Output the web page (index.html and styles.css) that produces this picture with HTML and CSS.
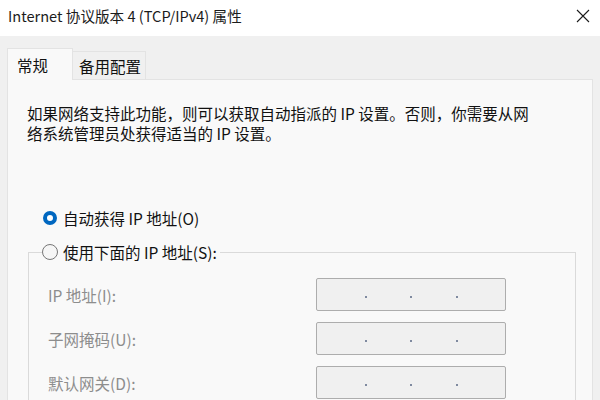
FILE: index.html
```html
<!DOCTYPE html>
<html lang="zh-CN">
<head>
<meta charset="utf-8">
<title>Internet 协议版本 4 (TCP/IPv4) 属性</title>
<link rel="stylesheet" href="styles.css">
</head>
<body>
<div class="window">
  <header class="titlebar">
    <span class="title">Internet 协议版本 4 (TCP/IPv4) 属性</span>
    <span class="close" aria-label="关闭">
      <svg width="14" height="14" viewBox="0 0 14 14"><path d="M1 1 L13 13 M13 1 L1 13" stroke="#1b1b1b" stroke-width="1.1" fill="none"/></svg>
    </span>
  </header>
  <div class="content">
    <div class="tabs">
      <div class="tab active">常规</div>
      <div class="tab">备用配置</div>
    </div>
    <div class="panel">
      <p class="intro">如果网络支持此功能，则可以获取自动指派的 IP 设置。否则，你需要从网<br>络系统管理员处获得适当的 IP 设置。</p>
      <div class="radio-row">
        <span class="radio checked"></span><span>自动获得 IP 地址(O)</span>
      </div>
      <fieldset class="group">
        <legend class="radio-row">
          <span class="radio"></span><span>使用下面的 IP 地址(S):</span>
        </legend>
        <div class="field">
          <span class="label">IP 地址(I):</span>
          <div class="ipbox"><span class="seg"></span><span class="dot"></span><span class="seg"></span><span class="dot"></span><span class="seg"></span><span class="dot"></span><span class="seg"></span></div>
        </div>
        <div class="field">
          <span class="label">子网掩码(U):</span>
          <div class="ipbox"><span class="seg"></span><span class="dot"></span><span class="seg"></span><span class="dot"></span><span class="seg"></span><span class="dot"></span><span class="seg"></span></div>
        </div>
        <div class="field">
          <span class="label">默认网关(D):</span>
          <div class="ipbox"><span class="seg"></span><span class="dot"></span><span class="seg"></span><span class="dot"></span><span class="seg"></span><span class="dot"></span><span class="seg"></span></div>
        </div>
      </fieldset>
    </div>
  </div>
</div>
</body>
</html>
```
FILE: styles.css
```css
html, body {
  margin: 0;
  padding: 0;
  height: 400px;
  overflow: hidden;
}
body {
  background: #f0f0f0;
  font-family: "Noto Sans CJK SC", "Noto Sans", sans-serif;
  font-size: 15.5px;
  color: #111111;
}
.window {
  width: 600px;
}
.titlebar {
  height: 36px;
  box-sizing: border-box;
  background: #ffffff;
  display: flex;
  align-items: center;
  justify-content: space-between;
  padding: 0 10px 5px 8px;
}
.title {
  font-size: 14.6px;
  color: #1b1b1b;
  line-height: 20px;
}
.close {
  display: flex;
  width: 14px;
  height: 14px;
}
.content {
  padding: 12px 8px 0 7px;
}
.tabs {
  display: flex;
  align-items: flex-end;
  height: 31px;
  position: relative;
  z-index: 1;
}
.tab {
  box-sizing: border-box;
  height: 28px;
  border: 1px solid #e3e3e3;
  border-bottom: none;
  background: #f0f0f0;
  display: flex;
  align-items: center;
  padding: 0 4px 0 6px;
  line-height: 20px;
}
.tab + .tab {
  border-left: none;
}
.tab.active {
  height: 32px;
  width: 66px;
  margin-bottom: -1px;
  background: #f9f9f9;
  padding: 0 0 0 9px;
}
.panel {
  box-sizing: border-box;
  width: 586px;
  height: 340px;
  background: #f9f9f9;
  border: 1px solid #e3e3e3;
  padding: 23px 16px 0 19px;
}
.intro {
  margin: 0;
  line-height: 20px;
  white-space: nowrap;
}
.radio-row {
  display: flex;
  align-items: center;
  gap: 6px;
  height: 20px;
  line-height: 20px;
  white-space: nowrap;
}
.panel > .radio-row {
  margin: 65px 0 0 16px;
}
.radio {
  box-sizing: border-box;
  width: 16px;
  height: 16px;
  border-radius: 50%;
  border: 1px solid #767676;
  background: #f6f6f6;
  flex: none;
}
.radio.checked {
  width: 14px;
  height: 14px;
  border: 4.5px solid #0067c0;
  background: #ffffff;
}
.group {
  margin: 14px 0 0 1px;
  padding: 0 0 20px 13px;
  border: 1px solid #dadada;
  min-width: 0;
}
.group legend {
  padding: 0 3px 0 0;
}
.group legend.radio-row {
  gap: 5px;
}
.field {
  display: grid;
  grid-template-columns: 268px 190px;
  align-items: center;
  margin: 11px 0 0 6px;
}
.field:first-of-type {
  margin-top: 16px;
}
.label {
  color: #8d8d8d;
  line-height: 20px;
}
.ipbox {
  box-sizing: border-box;
  height: 33px;
  border: 1px solid #adadad;
  border-radius: 2px;
  background: #f0f0f0;
  display: flex;
  align-items: center;
  padding: 5px 4px 0;
}
.seg {
  flex: 1;
}
.dot {
  width: 2px;
  height: 2px;
  background: #7f8aa0;
  flex: none;
}
```
